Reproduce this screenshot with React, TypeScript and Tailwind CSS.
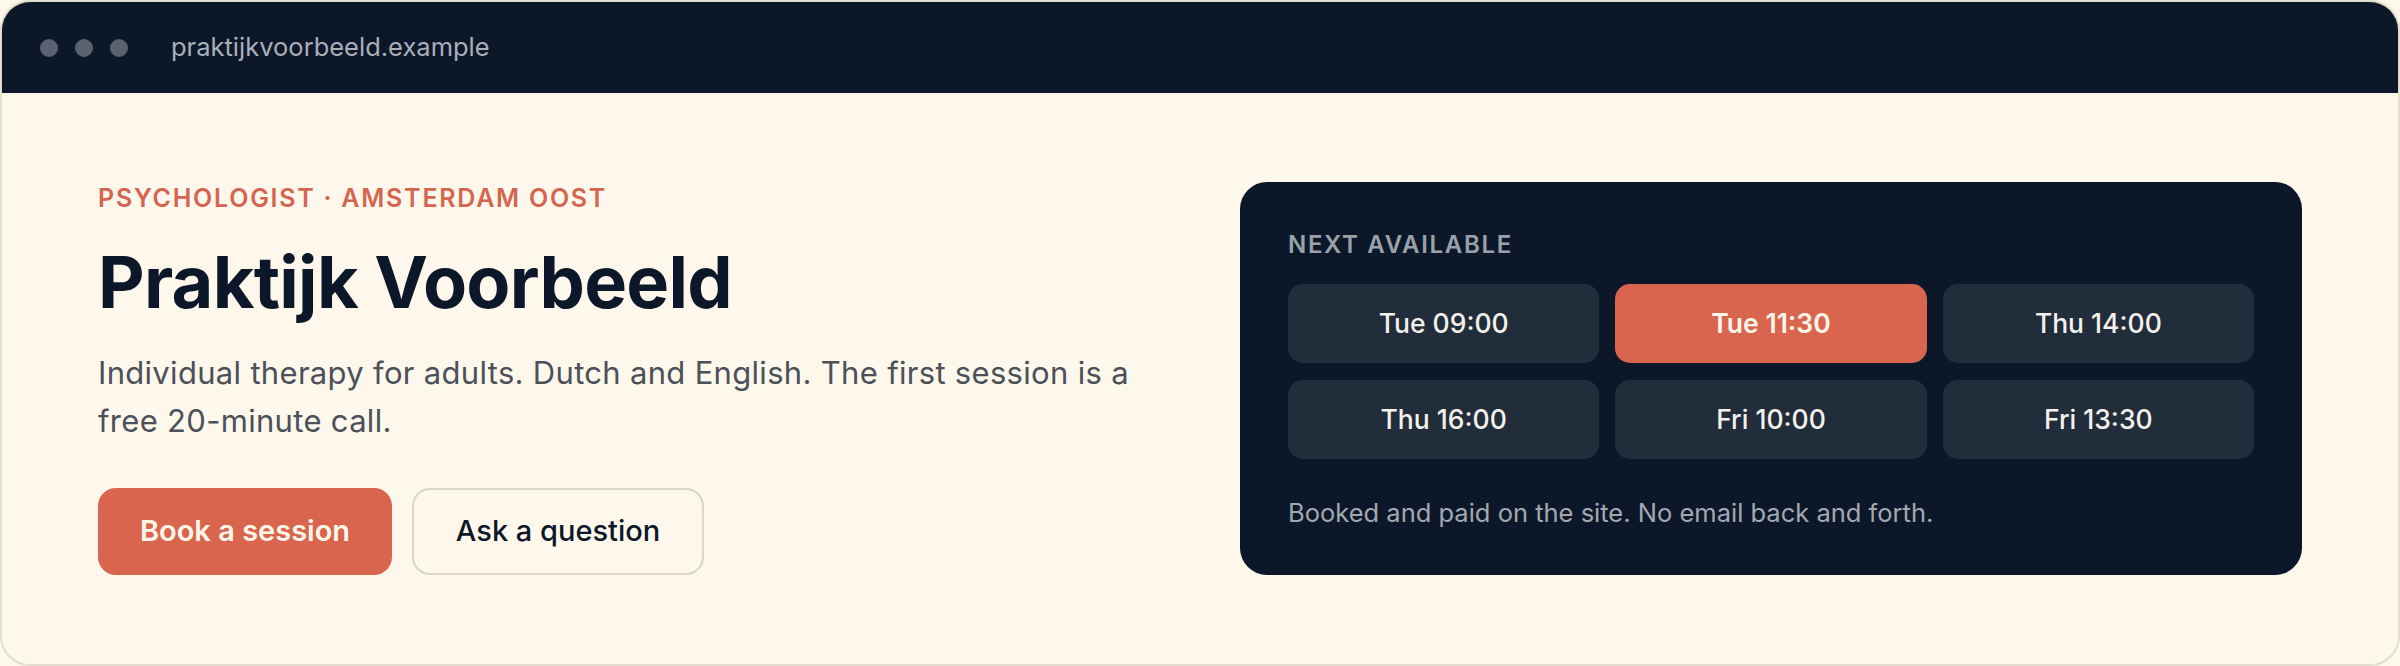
const slots = [
  { label: "Tue 09:00", active: false },
  { label: "Tue 11:30", active: true },
  { label: "Thu 14:00", active: false },
  { label: "Thu 16:00", active: false },
  { label: "Fri 10:00", active: false },
  { label: "Fri 13:30", active: false },
];

function BrowserBar() {
  return (
    <div className="flex h-[91px] items-center bg-[#0c1829] pl-[38px]">
      <div className="flex gap-[17px]">
        <span className="h-[18px] w-[18px] rounded-full bg-[#5a6270]" />
        <span className="h-[18px] w-[18px] rounded-full bg-[#5a6270]" />
        <span className="h-[18px] w-[18px] rounded-full bg-[#5a6270]" />
      </div>
      <span className="ml-[43px] text-[25.5px] text-[#a9afb8]">praktijkvoorbeeld.example</span>
    </div>
  );
}

function Intro() {
  return (
    <div className="flex flex-col">
      <p className="text-[25px] font-semibold leading-[30px] tracking-[0.07em] text-[#d6654f]">
        PSYCHOLOGIST · AMSTERDAM OOST
      </p>
      <h1 className="mt-[29px] text-[72px] font-bold leading-[80px] tracking-[-0.01em] text-[#0c1829]">
        Praktijk Voorbeeld
      </h1>
      <p className="mt-[27px] text-[31px] leading-[48px] tracking-[0.01em] text-[#4b5059]">
        Individual therapy for adults. Dutch and English. The first session is a free 20-minute call.
      </p>
      <div className="mt-[43px] flex gap-[20px]">
        <button className="h-[87px] w-[294px] rounded-[18px] bg-[#d9654e] text-[29px] font-semibold text-[#fdf6ea]">
          Book a session
        </button>
        <button className="h-[87px] w-[292px] rounded-[18px] border-2 border-[#ddd5c6] text-[29px] font-medium text-[#0c1829]">
          Ask a question
        </button>
      </div>
    </div>
  );
}

function NextAvailable() {
  return (
    <div className="rounded-[27px] bg-[#0c1829] px-[48px] pb-[47px] pt-[48px]">
      <p className="text-[24px] font-semibold leading-[30px] tracking-[0.07em] text-[#9ba1aa]">NEXT AVAILABLE</p>
      <div className="mt-[24px] grid grid-cols-3 gap-x-[16px] gap-y-[17px]">
        {slots.map((s) => (
          <div
            key={s.label}
            className={
              s.active
                ? "flex h-[79px] items-center justify-center rounded-[15px] bg-[#d9654e] text-[26.5px] font-semibold text-[#fdf6ea]"
                : "flex h-[79px] items-center justify-center rounded-[15px] bg-[#222d3c] text-[26.5px] font-medium text-[#f4f1ea]"
            }
          >
            {s.label}
          </div>
        ))}
      </div>
      <p className="mt-[39px] text-[25.5px] leading-[30px] text-[#a3a8b0]">
        Booked and paid on the site. No email back and forth.
      </p>
    </div>
  );
}

export default function App() {
  return (
    <div
      className="h-[666px] w-full bg-[#fdf7ec]"
      style={{ fontFamily: "Inter, 'Noto Sans', sans-serif" }}
    >
      <div className="flex h-full flex-col overflow-hidden rounded-[30px] border-2 border-[#e4ddce] bg-[#fef8ec]">
        <BrowserBar />
        <div className="grid flex-1 grid-cols-2 items-center gap-[80px] px-[96px]">
          <Intro />
          <NextAvailable />
        </div>
      </div>
    </div>
  );
}
